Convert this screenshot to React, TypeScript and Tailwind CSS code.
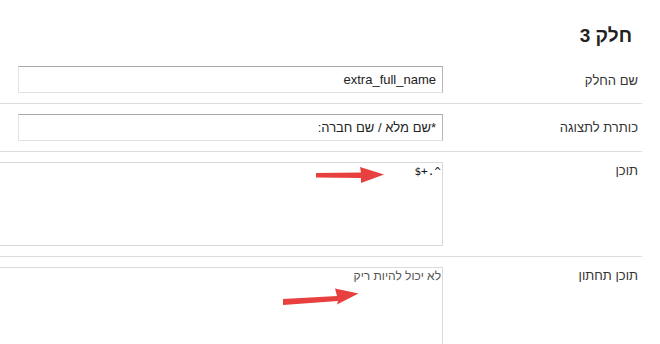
import React from "react";

const rowCls = "flex border-b border-[#dddddd] py-[10px]";
const labelCls = "w-[199px] shrink-0 pr-[4px] text-[13px] leading-[15px] text-[#333333]";

export default function App() {
  return (
    <div
      className="relative w-[660px] h-[344px] overflow-hidden bg-white"
      style={{ fontFamily: '"Liberation Sans", Arial, sans-serif' }}
    >
      <div dir="rtl" className="w-[642px] overflow-hidden">
        <div className="pr-[10px] pt-[25px] pb-[9px] text-[19px] leading-[22px] font-bold text-[#222222]">
          חלק 3
        </div>

        <div className={rowCls}>
          <div className={`${labelCls} pt-[7px]`}>שם החלק</div>
          <div className="flex-1 min-w-0">
            <div className="ml-[18px] h-[27px] border border-t-[#a9a9a9] border-r-[#b5b5b5] border-b-[#e3e3e3] border-l-[#e3e3e3] pr-[6px] text-[13px] leading-[25px] text-[#222222]">
              extra_full_name
            </div>
          </div>
        </div>

        <div className={rowCls}>
          <div className={`${labelCls} pt-[6px]`}>כותרת לתצוגה</div>
          <div className="flex-1 min-w-0">
            <div className="ml-[18px] h-[27px] border border-t-[#a9a9a9] border-r-[#b5b5b5] border-b-[#e3e3e3] border-l-[#e3e3e3] pr-[6px] text-[13px] leading-[25px] text-[#222222]">
              *שם מלא / שם חברה:
            </div>
          </div>
        </div>

        <div className={rowCls}>
          <div className={`${labelCls} pt-[1px]`}>תוכן</div>
          <div className="flex-1 min-w-0">
            <div
              dir="ltr"
              className="w-[470px] h-[84px] border border-[#d9d9d9] pr-[1px] pt-[2px] text-right text-[11px] leading-[13px] text-[#111111]"
              style={{ fontFamily: '"DejaVu Sans Mono", monospace' }}
            >
              $+.^
            </div>
          </div>
        </div>

        <div className="flex py-[10px]">
          <div className={`${labelCls} pt-[1px]`}>תוכן תחתון</div>
          <div className="flex-1 min-w-0">
            <div className="w-[470px] h-[80px] border border-[#d9d9d9] pr-[1px] pt-[1px] text-[12px] leading-[14px] text-[#555555]">
              לא יכול להיות ריק
            </div>
          </div>
        </div>
      </div>

      <svg className="absolute left-0 top-0 pointer-events-none" width="660" height="344">
        <polygon points="316,173 361,172.5 360,167 384,174.5 361,183 361,178 316,177.5" fill="#e8403e" />
        <polygon points="283,299 337,296 335,288.5 358.5,293.5 337,304.5 338,301 283,305" fill="#e8403e" />
      </svg>
    </div>
  );
}
